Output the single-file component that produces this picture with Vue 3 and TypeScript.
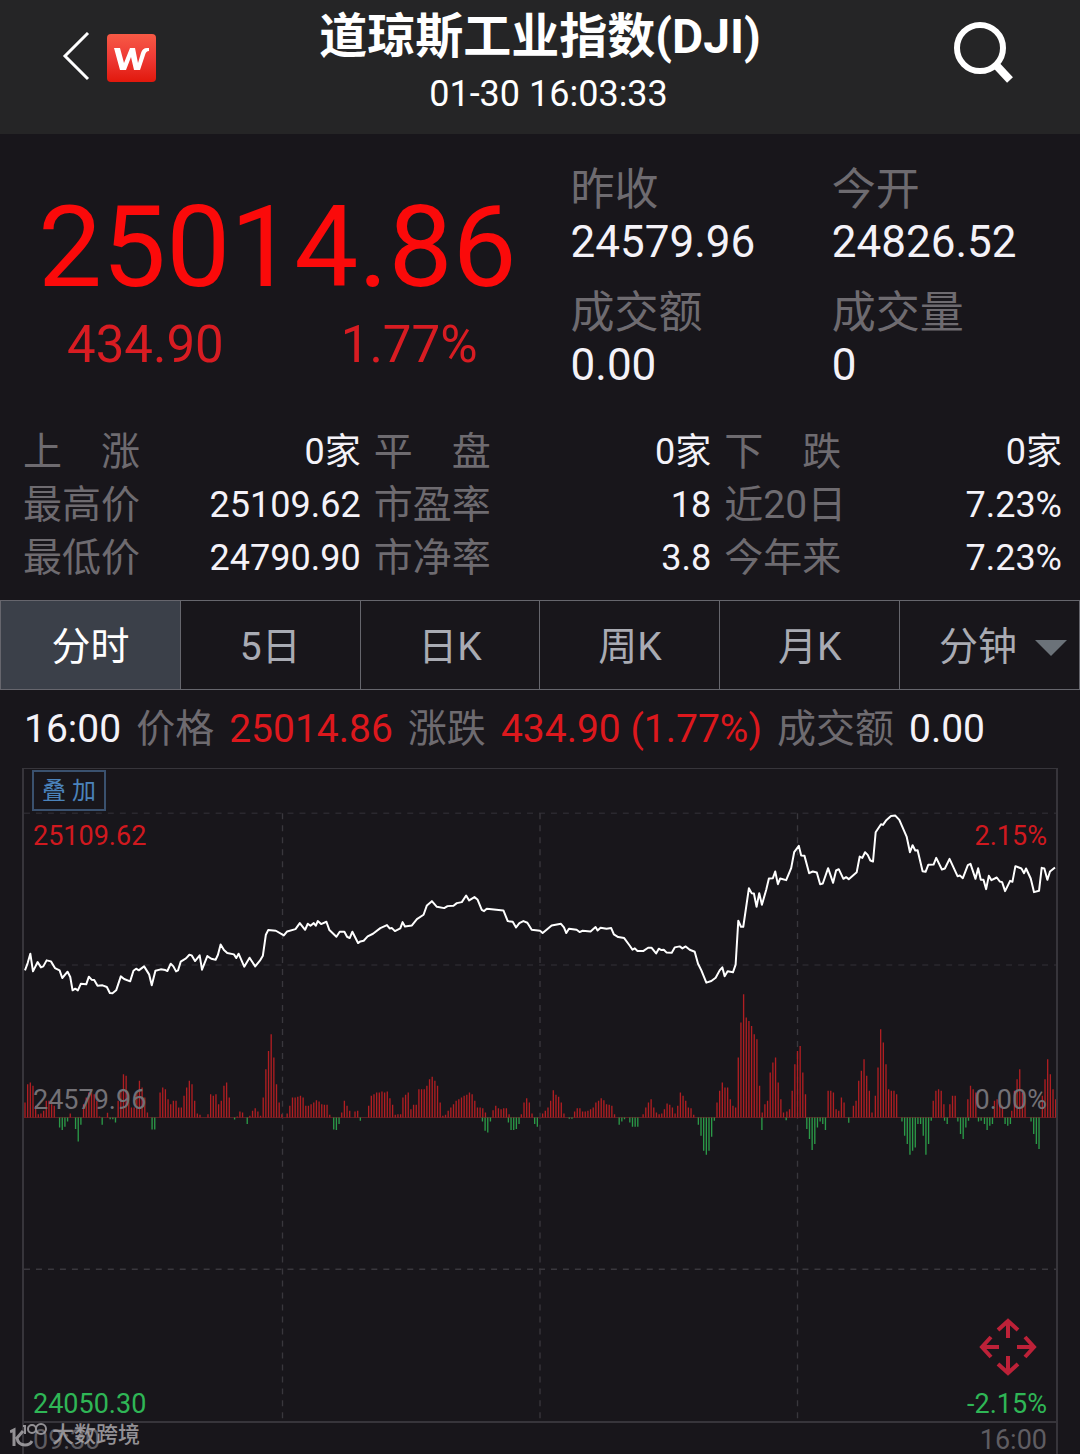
<script setup lang="ts">
import { ref } from 'vue'

interface Pair {
  label: string
  value: string
}

const quotes: Pair[] = [
  { label: '昨收', value: '24579.96' },
  { label: '今开', value: '24826.52' },
  { label: '成交额', value: '0.00' },
  { label: '成交量', value: '0' },
]

const stats: Pair[] = [
  { label: '上　涨', value: '0家' },
  { label: '平　盘', value: '0家' },
  { label: '下　跌', value: '0家' },
  { label: '最高价', value: '25109.62' },
  { label: '市盈率', value: '18' },
  { label: '近20日', value: '7.23%' },
  { label: '最低价', value: '24790.90' },
  { label: '市净率', value: '3.8' },
  { label: '今年来', value: '7.23%' },
]

const tabs = ['分时', '5日', '日K', '周K', '月K', '分钟']
const active = ref('分时')

// Intraday price line, in chart units (three per pixel at full width)
const price = `72,512 80,490 88,462 96,515 110,487 120,503 127,500 137,482 150,485 162,505 176,512 184,535
200,516 208,532 215,572 223,567 231,572 240,552 256,554 264,531 272,540 280,541 290,558 305,557 318,562
327,580 335,581 346,572 360,530 370,538 388,545 398,513 406,507 414,512 430,500 445,524 453,557 464,513
480,509 494,511 500,514 510,492 518,500 526,515 532,512 540,486 556,476 566,465 573,467 583,484 597,467
604,510 620,469 632,477 645,480 652,465 660,434 670,451 680,460 700,464 707,475 714,462 731,501 747,474
764,500 778,483 787,468 796,405 803,391 826,393 850,407 860,395 885,388 898,370 914,390 922,372 930,378
940,370 946,378 952,364 962,373 978,366 987,391 1008,411 1018,396 1032,396 1040,411 1048,415 1056,396
1073,430 1080,425 1090,423 1102,410 1118,402 1140,385 1160,376 1168,386 1175,385 1184,394 1200,386
1207,367 1214,380 1235,377 1250,358 1270,345 1280,317 1295,304 1310,321 1332,325 1342,319 1360,318
1370,310 1385,307 1398,287 1407,302 1423,292 1432,299 1445,330 1452,334 1460,327 1510,332 1523,364
1538,366 1548,383 1558,370 1570,364 1582,369 1595,390 1620,393 1628,400 1655,377 1683,372 1692,383
1699,400 1707,387 1730,390 1739,397 1748,393 1772,395 1787,382 1793,392 1802,384 1820,387 1834,385
1842,404 1855,412 1873,415 1890,438 1898,450 1905,446 1913,454 1930,454 1945,444 1955,444 1969,461
1977,447 1985,451 1992,450 2000,458 2016,459 2025,443 2040,440 2048,446 2058,440 2070,450 2085,456
2095,492 2105,512 2120,549 2135,544 2148,534 2160,512 2168,503 2175,530 2184,515 2200,518 2208,495
2216,363 2224,381 2231,381 2248,265 2256,280 2263,281 2271,321 2279,280 2287,315 2300,270 2308,236
2320,235 2327,215 2335,253 2342,236 2360,241 2375,205 2384,157 2398,138 2405,167 2415,168 2429,220
2440,215 2452,218 2462,253 2470,251 2486,205 2501,249 2510,212 2518,208 2532,237 2540,232 2548,238
2572,217 2581,170 2589,174 2597,157 2605,165 2613,182 2621,185 2629,97 2645,73 2651,75 2660,62 2675,48
2688,47 2700,60 2722,110 2732,157 2740,136 2748,152 2755,151 2770,214 2779,216 2787,195 2803,194
2811,174 2828,209 2837,206 2851,177 2875,229 2882,227 2891,235 2906,196 2914,192 2929,237 2937,205
2945,240 2953,240 2961,268 2969,228 2977,241 2993,233 3002,245 3009,247 3018,274 3033,243 3040,246
3049,199 3067,206 3075,220 3081,206 3095,236 3105,277 3120,273 3128,204 3136,206 3145,240 3153,215
3168,203`

// Momentum bars: first x of each run, then one height per minute
const runs: [number, number[]][] = [
  [72, [45, 100, 105, 95, 35, 10, 12, 20, 50, 50, 40, 35]],
  [176, [-30, -38, -28, -12, 12]],
  [224, [-35, -72, -22, 40, 60, 75, 75, 70, 50, 3, -22]],
  [320, [14, -5, -5, -15, 50, 80, 130, 125, 45, 30, 30, 75, 110, 90, 60, 15]],
  [454, [-36, -36]],
  [478, [75, 90, 85, 55, 40, 50, 50, 30, 30, 65, 90, 110, 100, 50, 12, 8]],
  [622, [10, 70, 65, 70, 40, 50, 95, 105, 60]],
  [702, [-6, 3, 18, 15]],
  [740, [-20, 5, 20, 28, 18, 5]],
  [788, [60, 145, 200, 250, 180, 100, 45, 10]],
  [860, [12, 35, 60, 60, 62, 65, 60, 35, 35, 40, 45, 52, 48, 40, 38, 38, 8]],
  [1000, [-36, -38, -20, 15, 50, 35, 20]],
  [1064, [18, 20, -10]],
  [1105, [35, 65, 70, 75, 75, 78, 75, 78, 58, 38, 8, 10, 10]],
  [1208, [60, 68, 75, 25, 38, 38]],
  [1256, [85, 85, 85, 95, 115, 122, 110, 95, 45, 5, 8, 8]],
  [1344, [20, 30, 40, 50, 55, 60, 65, 68, 75, 70, 50, 30, 30, 28, 15]],
  [1447, [-12, -40, -45, -12]],
  [1479, [22, 35, 28, 25, 28, 28, 10]],
  [1525, [-15, -38, -38, -35, -20]],
  [1564, [10, 45, 58, 45, 12]],
  [1604, [-20, -28]],
  [1628, [12, 20, 30, 50, 82, 68, 62, 45, 12]],
  [1708, [-4, -4]],
  [1724, [18, 28, 28, 18, 18, 20, 25, 30, 45, 50, 58, 52, 40, 38, 35, 10]],
  [1858, [-22, -12, -5]],
  [1890, [-15, -28, -28, -28]],
  [1930, [10, 30, 45, 55, 30, 15, 10, 12, 25, 42, 38, 30, 12, 35, 75, 65, 50, 30, 28, 8]],
  [2096, [-22, -55, -100, -112, -100, -58, -10]],
  [2152, [45, 80, 105, 90, 90, 55]],
  [2192, [15, 35, 30, 180, 285, 370, 300, 290, 275, 250, 235, 95, 15]],
  [2287, [-38]],
  [2296, [40, 50, 135, 165, 180, 105, 55, 15, -8]],
  [2362, [18, 25, 80, 160, 200, 215, 135, 70]],
  [2422, [-35, -65, -98, -80, -30, -12, -20, -38]],
  [2486, [80, 80, 75, 25, 20, 60, 45]],
  [2548, [-16]],
  [2562, [35, 50, 110, 140, 175, 125, 80, 15]],
  [2628, [65, 150, 265, 225, 160, 85, 80, 80, 70]],
  [2708, [-12, -55, -80, -112, -100, -90, -20, -20, -55, -112, -80, -10]],
  [2802, [50, 80, 85, 80, 40]],
  [2836, [-10, -20]],
  [2852, [40, 65, 65]],
  [2876, [-12, -50, -65, -30, -10]],
  [2906, [55, 95, 85, 75]],
  [2938, [-12, -10]],
  [2956, [-20, -38, -25, -20]],
  [2986, [50, 55, 50, 35]],
  [3018, [-20, -25, -20]],
  [3038, [20, 80, 115, 145, 75, 50]],
  [3096, [-12, -50, -80, -95]],
  [3130, [65, 115, 175, 130, 85, 55]],
]

const BASE = 954

function bars(sign: number): string {
  return runs
    .flatMap(([x, hs]) => hs.map((h, i) => (h * sign > 0 ? `M${x + i * 8} ${BASE}V${BASE - h}` : '')))
    .join('')
}

const upBars = bars(1)
const downBars = bars(-1)
</script>

<template>
  <div class="app">
    <header class="top">
      <div class="side">
        <button class="icon" aria-label="返回">
          <svg width="30" height="50" viewBox="0 0 30 50"><path d="M26 1 3 24l23 23" fill="none" stroke="#fff" stroke-width="3" /></svg>
        </button>
        <svg class="logo" width="50" height="50" viewBox="0 0 50 50" role="img" aria-label="W">
          <defs>
            <linearGradient id="red" x1="0" y1="0" x2="0" y2="1">
              <stop offset="0" stop-color="#f75a45" />
              <stop offset=".5" stop-color="#ee3a35" />
              <stop offset="1" stop-color="#e2180c" />
            </linearGradient>
          </defs>
          <rect x="1" y="1" width="49" height="48" rx="4" fill="url(#red)" />
          <path d="M8 15h6l4 15 6-15h5l3 15 3-10q1.500-5 6-5h2v3q-3 0-4 4l-5 15h-6l-3-13-5 13h-6z" fill="#fff" />
        </svg>
      </div>
      <div class="heading">
        <h1>道琼斯工业指数(DJI)</h1>
        <time>01-30 16:03:33</time>
      </div>
      <div class="side end">
        <button class="icon" aria-label="搜索">
          <svg width="64" height="66" viewBox="0 0 64 66" fill="none" stroke="#fff">
            <circle cx="28" cy="28" r="23" stroke-width="6" />
            <path d="M44 45 58 60" stroke-width="8" />
          </svg>
        </button>
      </div>
    </header>

    <section class="summary">
      <div class="now">
        <strong>25014.86</strong>
        <div class="change"><span>434.90</span><span>1.77%</span></div>
      </div>
      <dl class="quotes">
        <div v-for="q in quotes" :key="q.label">
          <dt>{{ q.label }}</dt>
          <dd>{{ q.value }}</dd>
        </div>
      </dl>
    </section>

    <dl class="stats">
      <div v-for="s in stats" :key="s.label">
        <dt>{{ s.label }}</dt>
        <dd>{{ s.value }}</dd>
      </div>
    </dl>

    <nav class="tabs">
      <button
        v-for="t in tabs"
        :key="t"
        :class="{ active: t === active, more: t === '分钟' }"
        @click="active = t"
      >
        {{ t }}
        <svg v-if="t === '分钟'" width="32" height="16" viewBox="0 0 32 16"><path d="M0 0h32L16 16z" fill="#6b7279" /></svg>
      </button>
    </nav>

    <p class="info">
      <span class="white">16:00</span>
      <span>价格</span>
      <span class="red">25014.86</span>
      <span>涨跌</span>
      <span class="red">434.90 (1.77%)</span>
      <span>成交额</span>
      <span class="white">0.00</span>
    </p>

    <section class="chart">
      <div class="plot">
        <svg class="graph" viewBox="69 -93 3102 1959" preserveAspectRatio="none">
          <g class="grid">
            <path class="faint" d="M69 40H3171M69 496H3171" />
            <path d="M69 1410H3171" />
            <path d="M846 40V1866M1620 40V1866M2394 40V1866" />
          </g>
          <path d="M69 954H3171" stroke="#5c2026" stroke-width="3" />
          <path :d="upBars" stroke="#b01e22" stroke-width="4" />
          <path :d="downBars" stroke="#2b9a48" stroke-width="4" />
          <polyline :points="price" fill="none" stroke="#fff" stroke-width="6" stroke-linejoin="round" />
        </svg>
        <button class="overlay">叠 加</button>
        <span class="tag high left">25109.62</span>
        <span class="tag high right">2.15%</span>
        <span class="tag mid left">24579.96</span>
        <span class="tag mid right">0.00%</span>
        <span class="tag low left">24050.30</span>
        <span class="tag low right">-2.15%</span>
        <button class="expand" aria-label="全屏">
          <svg width="58" height="58" viewBox="0 0 58 58" fill="none" stroke="#bd2138" stroke-width="4">
            <path d="M29 20V3M19 12 29 3l10 9M29 38v17M19 46l10 9 10-9M20 29H3M12 19 3 29l9 10M38 29h17M46 19l9 10-9 10" />
          </svg>
        </button>
      </div>
      <div class="times"><span>09:30</span><span>16:00</span></div>
      <div class="mark">
        <svg width="38" height="26" viewBox="0 0 38 26" fill="none" stroke="currentColor" stroke-width="3">
          <path d="M0 10l4-2v16M13 9l-6 7q1 7 8 7 5 0 7-4" />
          <path d="M13 4h2v8" stroke-width="2" />
          <circle cx="22" cy="7" r="4" stroke-width="2" />
          <circle cx="31" cy="7" r="5" stroke-width="2" />
        </svg>
        <span>大数跨境</span>
      </div>
    </section>
  </div>
</template>

<style>
body {
  margin: 0;
  background: #18161b;
}
</style>

<style scoped>
.app {
  background: #18161b;
  color: #f4f2f8;
  font-family: Roboto, 'Noto Sans CJK SC', sans-serif;
  font-size: 39px;
}
h1,
dl,
dd,
p {
  margin: 0;
}
button {
  margin: 0;
  padding: 0;
  border: 0;
  background: none;
  color: inherit;
  font: inherit;
}
svg {
  display: block;
}
.top {
  display: grid;
  grid-template-columns: 1fr auto 1fr;
  height: 134px;
  background: #252526;
  color: #fff;
}
.side {
  display: flex;
  align-items: flex-start;
  gap: 14px;
  padding: 32px 64px 0 62px;
}
.side.end {
  justify-content: flex-end;
  padding-top: 20px;
}
.logo {
  margin-top: 1px;
}
.heading {
  display: flex;
  flex-direction: column;
  align-items: center;
  padding-top: 8px;
}
h1 {
  font-size: 48px;
  line-height: 58px;
  font-weight: 700;
}
time {
  padding-left: 17px;
  font-size: 36px;
  line-height: 56px;
}
.summary {
  display: grid;
  grid-template-columns: 569fr 511fr;
  padding: 27px 0 38px;
}
.now {
  display: flex;
  flex-direction: column;
  padding: 24px 54px 0 38px;
  color: #fb0a0a;
}
.now strong {
  font-size: 114px;
  line-height: 124px;
  font-weight: 400;
}
.change {
  display: flex;
  justify-content: space-between;
  padding: 6px 39px 0 29px;
  color: #d81c22;
  font-size: 51px;
  line-height: 60px;
}
.quotes {
  display: grid;
  grid-template-columns: 262fr 249fr;
  row-gap: 19px;
  font-size: 44px;
}
.quotes dt {
  line-height: 58px;
}
.quotes dd {
  line-height: 46px;
}
dt {
  color: #6e6b70;
}
.stats {
  display: grid;
  grid-template-columns: repeat(3, 1fr);
  column-gap: 13px;
  padding: 0 18px 15px 23px;
  line-height: 53px;
}
.stats div {
  display: flex;
  justify-content: space-between;
}
.stats dd {
  font-size: 36px;
}
.tabs {
  display: grid;
  grid-template-columns: repeat(6, 1fr);
  height: 90px;
  box-sizing: border-box;
  border: 1px solid #66666d;
  border-right: 0;
}
.tabs button {
  display: flex;
  align-items: center;
  justify-content: center;
  padding-bottom: 5px;
  border-right: 1px solid #66666d;
  color: #a9abb3;
}
.tabs .active {
  background: #3b4049;
  color: #fff;
}
.tabs .more {
  justify-content: flex-end;
  gap: 18px;
  padding-right: 12px;
}
.tabs svg {
  margin-top: 10px;
}
.info {
  display: flex;
  gap: 15px;
  padding: 11px 24px 10px;
  color: #6e6b70;
  line-height: 57px;
  white-space: nowrap;
}
.white {
  color: #f4f2f8;
}
.red {
  color: #dc181d;
}
.chart {
  position: relative;
  margin: 0 22px;
  border: 2px solid #37353b;
  border-width: 1px 2px 0;
  font-size: 27px;
}
.plot {
  position: relative;
  border-bottom: 2px solid #37353b;
}
.graph {
  width: 100%;
  height: 652px;
}
.grid {
  fill: none;
  stroke: #39373d;
  stroke-width: 4;
  stroke-dasharray: 18 18;
}
.faint {
  stroke: #2a282f;
}
.overlay {
  position: absolute;
  top: 1px;
  left: 8px;
  width: 74px;
  height: 41px;
  border: 2px solid #3a516e;
  color: #4b83bb;
  font-size: 24px;
  line-height: 36px;
}
.tag {
  position: absolute;
  line-height: 32px;
}
.left {
  left: 9px;
}
.right {
  right: 9px;
}
.high {
  top: 51px;
  color: #d0191f;
}
.mid {
  top: 315px;
  color: #737176;
}
.low {
  bottom: 1px;
  color: #2fb656;
}
.expand {
  position: absolute;
  right: 19px;
  bottom: 45px;
}
.times {
  display: flex;
  justify-content: space-between;
  padding: 3px 9px 0;
  color: #5f5d62;
  line-height: 28px;
}
.mark {
  position: absolute;
  left: -14px;
  bottom: 5px;
  display: flex;
  align-items: center;
  gap: 4px;
  color: #a9a7ab;
  font-size: 22px;
  line-height: 28px;
  font-weight: 500;
  opacity: 0.85;
}
</style>
